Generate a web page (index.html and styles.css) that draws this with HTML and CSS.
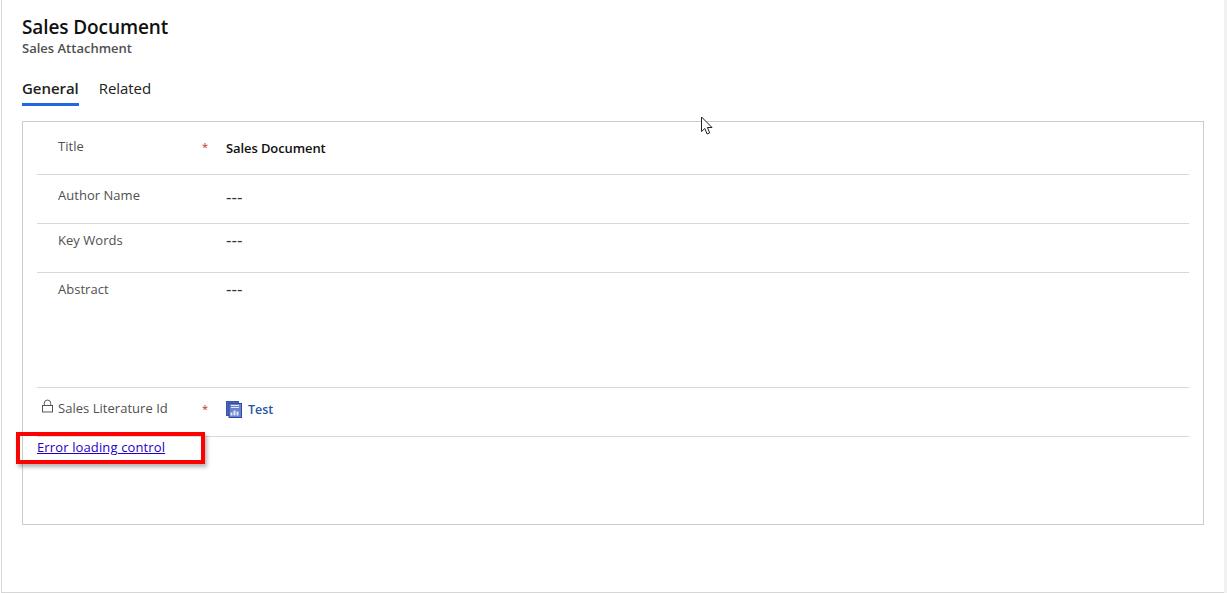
FILE: index.html
```
<!DOCTYPE html>
<html lang="en">
<head>
<meta charset="utf-8">
<title>Sales Document</title>
<link rel="stylesheet" href="styles.css">
</head>
<body>
<main class="page">
  <header class="head">
    <h1 class="title">Sales Document</h1>
    <div class="subtitle">Sales Attachment</div>
  </header>
  <nav class="tabs">
    <a class="tab active">General</a>
    <a class="tab">Related</a>
  </nav>
  <section class="card">
    <div class="row row-title">
      <div class="label"><span>Title</span><span class="req">*</span></div>
      <div class="value strong">Sales Document</div>
    </div>
    <div class="row row-author">
      <div class="label"><span>Author Name</span></div>
      <div class="value dash">---</div>
    </div>
    <div class="row row-key">
      <div class="label"><span>Key Words</span></div>
      <div class="value dash">---</div>
    </div>
    <div class="row row-abstract">
      <div class="label"><span>Abstract</span></div>
      <div class="value dash">---</div>
    </div>
    <div class="row row-lit">
      <div class="label">
        <svg class="lock" width="12" height="14" viewBox="0 0 12 14" fill="none" stroke="#4a4a4a" stroke-width="1"><rect x="0.5" y="6.5" width="11" height="7"/><path d="M2.5 6.5V4a3.5 3.5 0 0 1 7 0v2.5"/></svg>
        <span>Sales Literature Id</span><span class="req">*</span>
      </div>
      <div class="value link">
        <svg class="doc" width="16" height="17" viewBox="0 0 16 17"><rect x="0.5" y="0.5" width="12" height="14" fill="#4a66bd" stroke="#3553a8"/><rect x="3" y="2.5" width="12.5" height="14" fill="#6c82cf" stroke="#2f4ba0"/><path d="M5 4.5h8M5 6.5h8" stroke="#e4e9f8"/><path d="M5.5 14.5v-3M8.5 14.5v-5M11.5 14.5v-4" stroke="#e4e9f8" stroke-width="2"/></svg>
        <span>Test</span>
      </div>
    </div>
    <div class="error"><a class="error-link" href="#">Error loading control</a></div>
  </section>
  <div class="highlight"></div>
  <svg class="cursor" width="14" height="20" viewBox="0 0 14 20"><path d="M1.5 1v14.5l3.3-3 2.3 5.5 2.6-1.1-2.3-5.4h4.6z" fill="#fff" stroke="#222" stroke-width="1"/></svg>
</main>
</body>
</html>
```
FILE: styles.css
```
* { box-sizing: border-box; }
html, body { margin: 0; height: 100%; overflow: hidden; }
body { font-family: "Open Sans", "Noto Sans", sans-serif; color: #333; background: linear-gradient(to right, #fff 1224px, #f1f1f1 1224px); }
.page {
  position: relative;
  width: 1223px;
  height: 593px;
  margin-left: 1px;
  padding: 16px 20px 0 20px;
  background: #fff;
  border-left: 1px solid #d6d6d6;
  border-bottom: 1px solid #d6d6d6;
}
.head { height: 43px; }
.title { margin: 0; font-size: 19px; line-height: 22px; font-weight: 600; color: #111; letter-spacing: -0.1px; }
.subtitle { font-size: 13px; line-height: 20px; font-weight: 600; color: #505050; }
.tabs { display: flex; gap: 20px; height: 62px; padding-top: 18px; }
.tab { height: 29px; font-size: 15px; line-height: 22px; color: #222; letter-spacing: -0.05px; }
.tab.active { font-weight: 600; border-bottom: 3px solid #2266e3; color: #222; }
.card { width: 1182px; height: 404px; padding: 0 14px; border: 1px solid #ccc; }
.row { display: flex; align-items: flex-start; border-bottom: 1px solid #d8d8d8; }
.row-title { height: 53px; padding-top: 15px; }
.row-author { height: 49px; padding-top: 11px; }
.row-key { height: 49px; padding-top: 7px; }
.row-abstract { height: 115px; padding-top: 7px; }
.row-lit { height: 49px; padding-top: 11px; }
.label { position: relative; display: flex; width: 189px; padding-left: 21px; font-size: 13px; line-height: 18px; color: #505050; letter-spacing: 0.03px; flex: none; }
.lock { position: absolute; left: 5px; top: 0; width: 11px; }
.req { position: absolute; left: 165px; top: 1px; font-size: 11px; color: #c4310c; }
.value { font-size: 13px; line-height: 20px; color: #333; }
.row-title .value, .row-author .value { margin-top: 1px; }
.row-key .value, .row-abstract .value { margin-top: -1px; }
.row-lit .value { margin-top: 1px; }
.dash { font-family: "Liberation Sans", sans-serif; font-size: 16.5px; }
.strong { font-weight: 600; color: #111; letter-spacing: -0.1px; }
.link { display: flex; align-items: center; gap: 6px; font-size: 12.5px; font-weight: 600; color: #2a55a5; }
.doc { margin-top: -2px; }
.error { font-size: 13px; line-height: 20px; }
.error-link { color: #2200cc; text-decoration: underline; letter-spacing: 0.13px; }
.highlight { position: absolute; left: 14px; top: 432px; width: 189px; height: 32px; border: 4px solid #ff0000; box-shadow: 2px 3px 4px rgba(0,0,0,.3); }
.cursor { position: absolute; left: 698px; top: 116px; }
```
